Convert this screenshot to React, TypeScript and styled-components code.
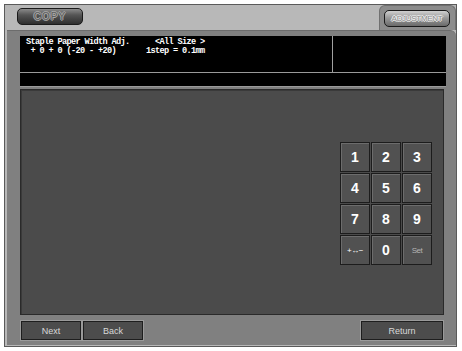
import React from "react";
import styled, { createGlobalStyle } from "styled-components";

const GlobalStyle = createGlobalStyle`
  *, *::before, *::after {
    box-sizing: border-box;
  }
  html, body {
    margin: 0;
    padding: 0;
    background: #fff;
  }
  body {
    font-family: "Liberation Sans", Arial, sans-serif;
  }
`;

const Screen = styled.div`
  margin: 4px 0 0 4px;
  width: 453px;
  height: 343px;
  background: #b8b8b8;
  border: 1px solid #5a5a5a;
  display: flex;
  flex-direction: column;
`;

const TabBar = styled.div`
  height: 25px;
  flex-shrink: 0;
  display: flex;
  justify-content: space-between;
  align-items: flex-start;
  padding-left: 12px;
`;

const PillButton = styled.div<{ light?: boolean }>`
  width: 66px;
  height: 17px;
  margin-top: ${(p) => (p.light ? "4px" : "3px")};
  border: 1px solid #1a1a1a;
  border-radius: 5px;
  background: ${(p) =>
    p.light
      ? "linear-gradient(#d0d0d0 0%, #9a9a9a 45%, #6a6a6a 100%)"
      : "linear-gradient(#8a8a8a 0%, #555 40%, #2e2e2e 100%)"};
  display: flex;
  align-items: center;
  justify-content: center;
  font-size: ${(p) => (p.light ? "8px" : "10px")};
  letter-spacing: ${(p) => (p.light ? "-0.3px" : "1px")};
  color: ${(p) => (p.light ? "#8a8a8a" : "#5e5e5e")};
  text-shadow: ${(p) =>
    p.light
      ? "1px 0 0 #f0f0f0, -1px 0 0 #f0f0f0, 0 1px 0 #f0f0f0, 0 -1px 0 #f0f0f0"
      : "1px 0 0 #a8a8a8, -1px 0 0 #a8a8a8, 0 1px 0 #a8a8a8, 0 -1px 0 #a8a8a8"};
`;

const TabHolder = styled.div`
  width: 77px;
  height: 25px;
  padding-left: 4px;
  background: #8c8c8c;
  border-radius: 6px 6px 0 0;
  border: 1px solid #707070;
  border-bottom: none;
`;

const MainPanel = styled.div`
  flex: 1;
  min-height: 0;
  margin: 0 0 1px 2px;
  background: #808080;
  border-radius: 0 6px 0 0;
  border-top: 1px solid #6c6c6c;
  padding: 5px 10px 0 13px;
  display: flex;
  flex-direction: column;
`;

const Header = styled.div`
  height: 37px;
  flex-shrink: 0;
  background: #000;
  border-bottom: 1px solid #9a9a9a;
  display: flex;
`;

const HeaderLeft = styled.div`
  width: 313px;
  border-right: 1px solid #a0a0a0;
  padding: 2px 0 0 6px;
  color: #fff;
  font-family: "Liberation Mono", "DejaVu Sans Mono", monospace;
  font-weight: bold;
  font-size: 8.6px;
  letter-spacing: -0.66px;
  line-height: 8.6px;
`;

const TextRow = styled.div`
  display: grid;
  grid-template-columns: 120px auto;
  white-space: pre;
`;

const Strip = styled.div`
  height: 14px;
  flex-shrink: 0;
  background: #000;
  border-bottom: 1px solid #9a9a9a;
`;

const Content = styled.div`
  margin: 2px 2px 0 0;
  height: 226px;
  flex-shrink: 0;
  background: #4b4b4b;
  border: 1px solid #2a2a2a;
  box-shadow: inset 1px 1px 0 #3a3a3a;
  display: flex;
  justify-content: flex-end;
  align-items: flex-start;
  padding: 52px 11px 0 0;
`;

const Keypad = styled.div`
  display: grid;
  grid-template-columns: repeat(3, 30px);
  grid-auto-rows: 30px;
  gap: 1px;
`;

const Key = styled.div<{ small?: boolean; dim?: boolean }>`
  background: #515151;
  border: 1px solid #1c1c1c;
  box-shadow: inset 1px 1px 0 #6c6c6c;
  display: flex;
  align-items: center;
  justify-content: center;
  color: ${(p) => (p.dim ? "#b4b4b4" : "#fff")};
  font-size: ${(p) => (p.small ? "8px" : "14px")};
  font-weight: ${(p) => (p.small ? "normal" : "bold")};
  letter-spacing: ${(p) => (p.small ? "-0.5px" : "0")};
`;

const Footer = styled.div`
  display: flex;
  align-items: flex-start;
  padding: 6px 0 0 1px;
  gap: 2px;
`;

const FootButton = styled.div<{ wide?: boolean }>`
  width: ${(p) => (p.wide ? "82px" : "60px")};
  height: 19px;
  background: #4c4c4c;
  border: 1px solid #1e1e1e;
  box-shadow: 0 0 0 1px #9a9a9a;
  display: flex;
  align-items: center;
  justify-content: center;
  color: #d8d8d8;
  font-size: 9px;
  margin-left: ${(p) => (p.wide ? "auto" : "0")};
  margin-right: ${(p) => (p.wide ? "3px" : "0")};
`;

const keys = ["1", "2", "3", "4", "5", "6", "7", "8", "9"];

export default function App() {
  return (
    <>
      <GlobalStyle />
      <Screen>
        <TabBar>
          <PillButton>COPY</PillButton>
          <TabHolder>
            <PillButton light>ADJUSTMENT</PillButton>
          </TabHolder>
        </TabBar>
        <MainPanel>
          <Header>
            <HeaderLeft>
              <TextRow>
                <span>Staple Paper Width Adj.</span>
                <span>{"  <All Size >"}</span>
              </TextRow>
              <TextRow>
                <span>{" + 0 + 0 (-20 - +20)"}</span>
                <span>1step = 0.1mm</span>
              </TextRow>
            </HeaderLeft>
          </Header>
          <Strip />
          <Content>
            <Keypad>
              {keys.map((k) => (
                <Key key={k}>{k}</Key>
              ))}
              <Key small>+↔−</Key>
              <Key>0</Key>
              <Key small dim>
                Set
              </Key>
            </Keypad>
          </Content>
          <Footer>
            <FootButton>Next</FootButton>
            <FootButton>Back</FootButton>
            <FootButton wide>Return</FootButton>
          </Footer>
        </MainPanel>
      </Screen>
    </>
  );
}
